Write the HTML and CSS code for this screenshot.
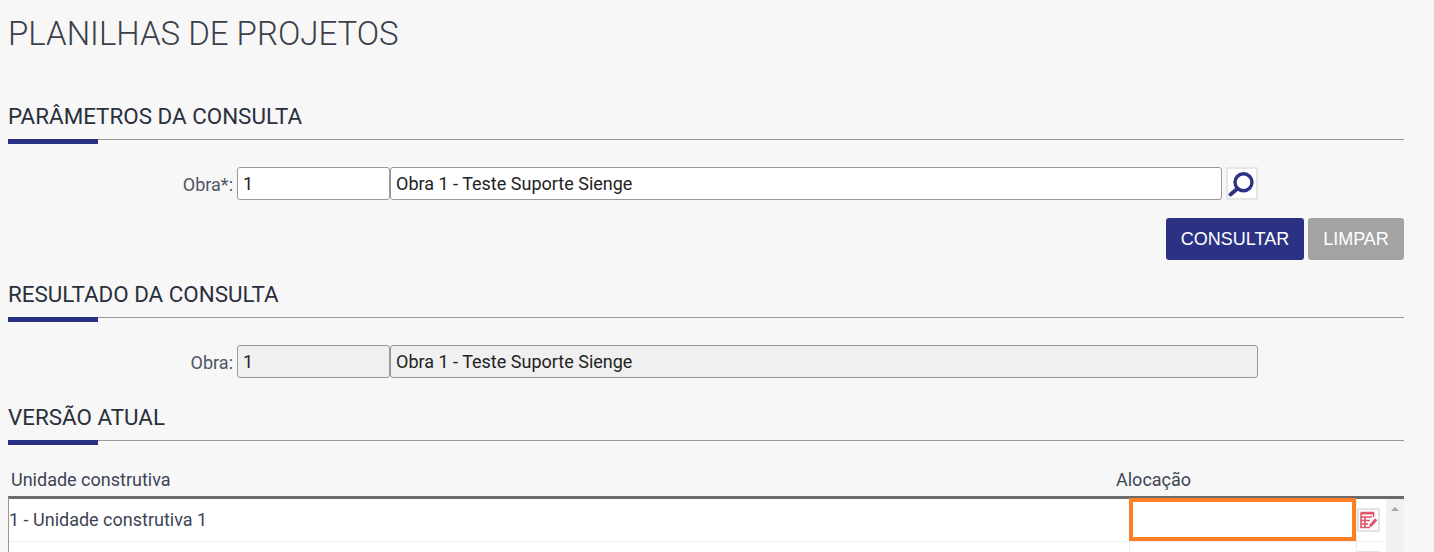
FILE: index.html
```html
<!DOCTYPE html>
<html lang="pt-BR">
<head>
  <meta charset="UTF-8">
  <meta name="viewport" content="width=device-width, initial-scale=1.0">
  <title>Planilhas de Projetos</title>
  <link rel="stylesheet" href="styles.css">
</head>
<body>

<div class="page">
  <h1 class="page-title">PLANILHAS DE PROJETOS</h1>

  <h2 class="section-title section-first">PARÂMETROS DA CONSULTA</h2>
  <div class="field-row">
    <label class="field-label">Obra*:</label>
    <input class="field-code" type="text" value="1">
    <input class="field-name" type="text" value="Obra 1 - Teste Suporte Sienge">
    <button class="search-btn" aria-label="Pesquisar">
      <svg width="28" height="28" viewBox="0 0 28 28">
        <circle cx="15.5" cy="12.2" r="8.5" fill="none" stroke="#2b3283" stroke-width="3.4"/>
        <path d="M9 19 L2.5 24.5" stroke="#2b3283" stroke-width="3.8" stroke-linecap="round"/>
      </svg>
    </button>
  </div>
  <div class="actions">
    <button class="btn btn-primary">CONSULTAR</button>
    <button class="btn btn-muted">LIMPAR</button>
  </div>

  <h2 class="section-title section-result">RESULTADO DA CONSULTA</h2>
  <div class="field-row">
    <label class="field-label">Obra:</label>
    <input class="field-code" type="text" value="1" disabled>
    <input class="field-name" type="text" value="Obra 1 - Teste Suporte Sienge" disabled>
  </div>

  <h2 class="section-title section-version">VERSÃO ATUAL</h2>
  <div class="grid-head">
    <span class="head-unit">Unidade construtiva</span>
    <span class="head-alloc">Alocação</span>
  </div>
  <div class="grid-body">
    <div class="grid-rows">
      <div class="grid-row">
        <div class="cell-unit">1 - Unidade construtiva 1</div>
        <div class="cell-alloc"><div class="highlight"></div></div>
        <div class="cell-icon">
          <button class="edit-btn" aria-label="Editar">
            <svg width="18" height="18" viewBox="0 0 18 18">
              <g fill="none" stroke="#e0566e" stroke-width="1.6">
                <path d="M1 1.5 H13.5 V6 M1 1.5 V16.5 H10"/>
                <path d="M1 6 H12 M1 9.5 H10 M1 13 H8 M5 6 V16.5"/>
              </g>
              <path d="M1 1 H14 V3.5 H1 Z" fill="#e0566e"/>
              <path d="M9.8 13.2 L15 7.2 L17.4 9.2 L12.2 15.2 L9.4 16 Z" fill="#e0566e"/>
            </svg>
          </button>
        </div>
      </div>
      <div class="grid-row grid-row-cut">
        <div class="cell-unit"></div>
        <div class="cell-alloc"></div>
        <div class="cell-icon"><button class="edit-btn" aria-label="Editar"></button></div>
      </div>
    </div>
    <div class="scrollbar"><span class="scroll-up"></span></div>
  </div>
</div>

</body>
</html>
```

FILE: styles.css
```css
html, body {
  height: 552px;
  margin: 0;
  overflow: hidden;
}
body {
  background-color: #f7f7f7;
  color: #333b4d;
  font-family: Roboto, "Liberation Sans", sans-serif;
  font-size: 18px;
}
.page {
  padding: 0 30px 0 8px;
}
.page-title {
  margin: 0;
  padding-top: 15px;
  height: 38px;
  line-height: 38px;
  font-size: 33px;
  font-weight: 300;
  color: #3a3f4b;
}
.section-title {
  position: relative;
  margin: 0;
  height: 35px;
  line-height: 23px;
  box-sizing: border-box;
  border-bottom: 1px solid #999;
  font-size: 22.4px;
  font-weight: 400;
  color: #2a2f3d;
}
.section-title::after {
  content: "";
  position: absolute;
  left: 0;
  top: 100%;
  width: 90px;
  height: 5px;
  background-color: #2b3283;
}
.section-first {
  margin-top: 52px;
}
.section-result {
  margin-top: 23px;
}
.section-version {
  margin-top: 28px;
}
.field-row {
  display: flex;
  align-items: center;
  margin-top: 27px;
  height: 33px;
  padding-right: 146px;
}
.field-label {
  width: 225px;
  margin-right: 4px;
  padding-top: 1px;
  text-align: right;
  color: #4d5566;
}
.field-row input {
  box-sizing: border-box;
  height: 33px;
  padding: 0 5px;
  border: 1px solid #999;
  border-radius: 3px;
  background-color: white;
  color: #222;
  font-family: inherit;
  font-size: 18px;
}
.field-code {
  width: 153px;
}
.field-name {
  flex: 1;
  min-width: 0;
}
.field-row input:disabled {
  background-color: #f0f0f0;
  color: #222;
}
.field-code:disabled {
  color: #44506a;
}
.search-btn {
  display: flex;
  align-items: center;
  justify-content: center;
  box-sizing: border-box;
  width: 32px;
  height: 33px;
  margin-left: 4px;
  padding: 0;
  border: 2px solid #e6e6e6;
  background-color: white;
}
.actions {
  display: flex;
  justify-content: flex-end;
  gap: 4px;
  margin-top: 18px;
}
.btn {
  height: 42px;
  border: none;
  border-radius: 3px;
  color: white;
  font-family: "Liberation Sans", Arial, sans-serif;
  font-size: 18px;
  padding: 0;
}
.btn-primary {
  width: 138px;
  background-color: #2b3283;
}
.btn-muted {
  width: 96px;
  background-color: #a3a3a3;
}
.grid-head {
  display: flex;
  height: 23px;
  margin-top: 27px;
  line-height: 23px;
  color: #3c4456;
}
.head-unit {
  width: 1108px;
  padding-left: 3px;
  box-sizing: border-box;
}
.grid-body {
  display: flex;
  box-sizing: border-box;
  height: 56px;
  margin-top: 5px;
  border-top: 3px solid #6b6b6b;
  border-left: 1px solid #999;
  background-color: white;
}
.grid-rows {
  flex: 1;
  min-width: 0;
}
.grid-row {
  display: flex;
  height: 43px;
  box-sizing: border-box;
  border-bottom: 1px solid #eee;
}
.grid-row-cut {
  height: 10px;
  overflow: hidden;
  border-bottom: none;
}
.cell-unit {
  width: 1120px;
  line-height: 42px;
  color: #3c4456;
}
.cell-alloc {
  position: relative;
  width: 228px;
  box-sizing: border-box;
  border-left: 1px solid #eee;
  border-right: 1px solid #eee;
}
.highlight {
  position: absolute;
  left: -1px;
  top: -1px;
  width: 227px;
  height: 43px;
  box-sizing: border-box;
  border: 4px solid #fd7f23;
}
.cell-icon {
  flex: 1;
  padding-top: 9px;
}
.edit-btn {
  display: flex;
  align-items: center;
  justify-content: center;
  box-sizing: border-box;
  width: 23px;
  height: 24px;
  padding: 0;
  border: 2px solid #e2e2e2;
  border-radius: 2px;
  background-color: white;
}
.scrollbar {
  width: 18px;
  background-color: #f1f1f1;
}
.scroll-up {
  display: block;
  width: 0;
  margin: 8px 0 0 5px;
  border-left: 4px solid transparent;
  border-right: 4px solid transparent;
  border-bottom: 4px solid #a8a8a8;
}
```
